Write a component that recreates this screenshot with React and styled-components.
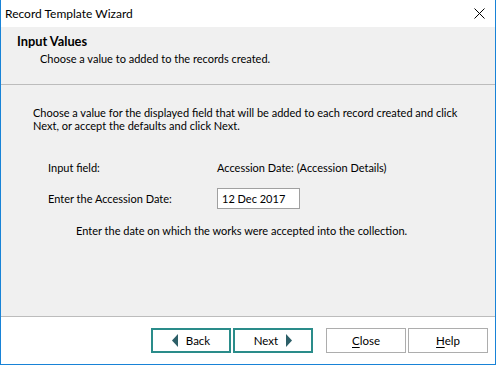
import React from 'react'
import styled, { createGlobalStyle } from 'styled-components'

const GlobalStyle = createGlobalStyle`
  html, body {
    margin: 0;
    padding: 0;
    background: #ffffff;
  }
  body {
    font-family: Lato, "Noto Sans", sans-serif;
    font-size: 11px;
    color: #000;
  }
`

const Window = styled.div`
  width: 496px;
  height: 365px;
  box-sizing: border-box;
  border: 1px solid #1883d7;
  border-top: none;
  display: flex;
  flex-direction: column;
  background: #f0f0f0;
`

const TitleBar = styled.div`
  height: 27px;
  flex: none;
  background: #fff;
  display: flex;
  align-items: center;
  justify-content: space-between;
  padding: 0 10px 0 4px;
  font-size: 12px;
`

const CloseX = styled.svg`
  width: 11px;
  height: 11px;
`

const Header = styled.div`
  height: 58px;
  flex: none;
  box-sizing: border-box;
  border-bottom: 1px solid #bcbcbc;
  padding: 6px 0 0 16px;
  line-height: 16px;
  h1 {
    margin: 0;
    font-size: 12.8px;
    font-weight: bold;
  }
  p {
    margin: 2px 0 0 23px;
  }
`

const Body = styled.div`
  flex: 1;
  padding: 21px 20px 0 32px;
  line-height: 13px;
  p {
    margin: 0;
  }
`

const Fields = styled.div`
  display: grid;
  grid-template-columns: 169px auto;
  row-gap: 10px;
  align-items: center;
  margin: 25px 0 0 15px;
`

const Label = styled.div`
  height: 21px;
  display: flex;
  align-items: center;
`

const DateInput = styled.input`
  width: 83px;
  height: 21px;
  box-sizing: border-box;
  border: 1px solid #a0a0a0;
  background: #fff;
  padding: 0 4px 1px;
  font: inherit;
  color: #000;
  outline: none;
`

const Hint = styled.p`
  && {
    margin: 15px 0 0 43px;
  }
`

const Footer = styled.div`
  height: 48px;
  flex: none;
  box-sizing: border-box;
  border-top: 1px solid #bcbcbc;
  background: #fff;
  display: flex;
  justify-content: flex-end;
  align-items: flex-start;
  padding: 11px 7px 0 0;
`

const ButtonGroup = styled.div`
  display: flex;
  gap: 2px;
  & + & {
    margin-left: 13px;
  }
`

const Button = styled.button`
  width: 80px;
  height: 25px;
  box-sizing: border-box;
  background: #fff;
  border: ${p => (p.$nav ? '2px solid #2a8c8a' : '1px solid #adadad')};
  font: inherit;
  font-size: 11.5px;
  color: #000;
  display: flex;
  align-items: center;
  justify-content: center;
  gap: 8px;
  padding: 0 0 1px;
  u {
    text-decoration: underline;
    text-underline-offset: 2px;
  }
`

const Arrow = ({ dir }) => (
  <svg width="6" height="13" viewBox="0 0 6 13">
    <path d={dir === 'left' ? 'M6 0 L0 6.5 L6 13 Z' : 'M0 0 L6 6.5 L0 13 Z'} fill="#2d5f68" />
  </svg>
)

export default function App() {
  return (
    <>
      <GlobalStyle />
      <Window>
        <TitleBar>
          <span>Record Template Wizard</span>
          <CloseX viewBox="0 0 11 11">
            <path d="M0.5 0.5 L10.5 10.5 M10.5 0.5 L0.5 10.5" stroke="#000" strokeWidth="1" />
          </CloseX>
        </TitleBar>
        <Header>
          <h1>Input Values</h1>
          <p>Choose a value to added to the records created.</p>
        </Header>
        <Body>
          <p>
            Choose a value for the displayed field that will be added to each record created and click
            Next, or accept the defaults and click Next.
          </p>
          <Fields>
            <Label>Input field:</Label>
            <Label>Accession Date: (Accession Details)</Label>
            <Label>Enter the Accession Date:</Label>
            <div>
              <DateInput defaultValue="12 Dec 2017" />
            </div>
          </Fields>
          <Hint>Enter the date on which the works were accepted into the collection.</Hint>
        </Body>
        <Footer>
          <ButtonGroup>
            <Button $nav>
              <Arrow dir="left" />
              Back
            </Button>
            <Button $nav>
              Next
              <Arrow dir="right" />
            </Button>
          </ButtonGroup>
          <ButtonGroup>
            <Button><span><u>C</u>lose</span></Button>
            <Button><span><u>H</u>elp</span></Button>
          </ButtonGroup>
        </Footer>
      </Window>
    </>
  )
}
